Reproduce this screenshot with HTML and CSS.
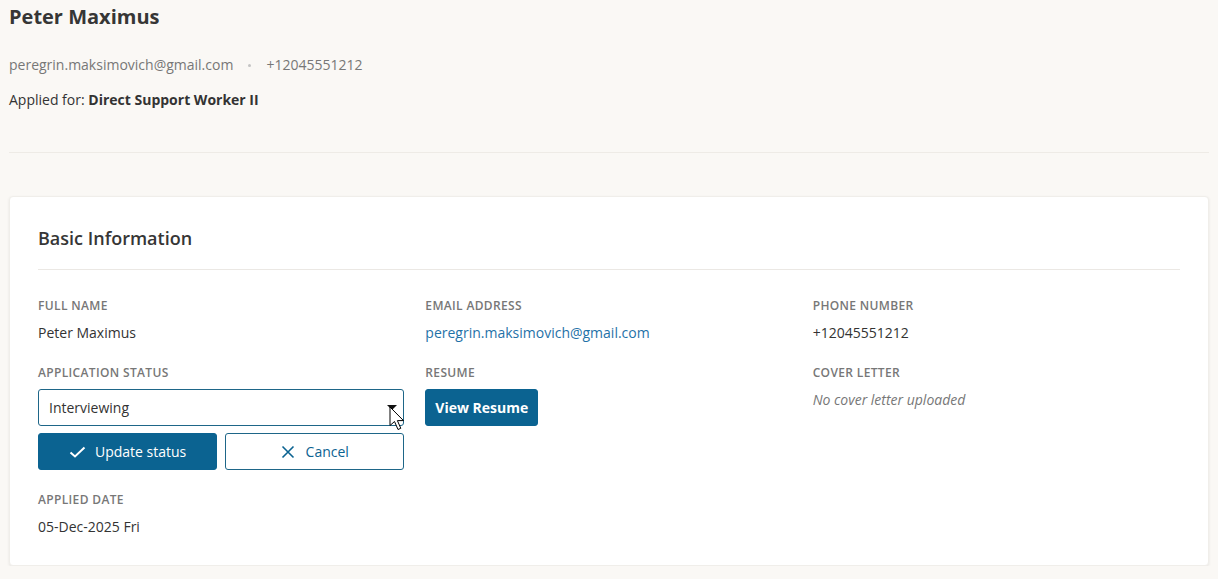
FILE: index.html
```html
<!DOCTYPE html>
<html lang="en">
<head>
<meta charset="utf-8">
<title>Peter Maximus</title>
<link rel="stylesheet" href="styles.css">
</head>
<body>
<div class="page">
  <header class="head">
    <h1 class="name">Peter Maximus</h1>
    <div class="contact">
      <span>peregrin.maksimovich@gmail.com</span>
      <span class="dot"></span>
      <span>+12045551212</span>
    </div>
    <div class="applied">Applied for: <strong>Direct Support Worker II</strong></div>
  </header>
  <hr class="divider">
  <section class="card">
    <h2 class="card-title">Basic Information</h2>
    <div class="grid">
      <div class="field">
        <div class="label">Full Name</div>
        <div class="value">Peter Maximus</div>
      </div>
      <div class="field">
        <div class="label">Email Address</div>
        <a class="value link" href="#">peregrin.maksimovich@gmail.com</a>
      </div>
      <div class="field">
        <div class="label">Phone Number</div>
        <div class="value">+12045551212</div>
      </div>

      <div class="field">
        <div class="label">Application Status</div>
        <div class="select">
          <span>Interviewing</span>
          <span class="caret"></span>
          <svg class="cursor" width="16" height="26" viewBox="0 0 16 26"><path d="M1 1 L1 19.5 L5.5 15.5 L9 23.5 L11.8 22.3 L8.4 14.6 L14.5 14.6 Z" fill="#fff" stroke="#000" stroke-width="1" stroke-linejoin="round"/></svg>
        </div>
        <div class="actions">
          <button class="btn primary">
            <svg width="17" height="16" viewBox="0 0 17 16"><path d="M1.5 8.5 L6 12.5 L15.5 3.5" fill="none" stroke="#fff" stroke-width="2"/></svg>
            Update status
          </button>
          <button class="btn outline">
            <svg width="14" height="14" viewBox="0 0 14 14"><path d="M1.5 1.5 L12.5 12.5 M12.5 1.5 L1.5 12.5" fill="none" stroke="#0b6391" stroke-width="1.6"/></svg>
            Cancel
          </button>
        </div>
      </div>
      <div class="field">
        <div class="label">Resume</div>
        <div class="resume-wrap"><button class="btn primary resume">View Resume</button></div>
      </div>
      <div class="field">
        <div class="label">Cover Letter</div>
        <div class="value muted">No cover letter uploaded</div>
      </div>

      <div class="field">
        <div class="label">Applied Date</div>
        <div class="value">05-Dec-2025 Fri</div>
      </div>
    </div>
  </section>
</div>
</body>
</html>
```

FILE: styles.css
```css
* { box-sizing: border-box; }
html, body { margin: 0; padding: 0; }
body {
  background: #faf8f5;
  font-family: "Open Sans", "Noto Sans", sans-serif;
  color: #333;
  font-size: 14px;
}
.page { padding: 3px 9px 0 9px; }
.head { padding: 0; }
.name {
  margin: 0;
  font-size: 20px;
  line-height: 28px;
  font-weight: 700;
  color: #363636;
}
.contact {
  margin-top: 24px;
  line-height: 20px;
  color: #777;
  display: flex;
  align-items: center;
  gap: 15px;
}
.contact .dot {
  width: 3px;
  height: 3px;
  border-radius: 50%;
  background: #c4c4c4;
}
.applied {
  margin-top: 15px;
  line-height: 20px;
  color: #333;
}
.applied strong { font-weight: 700; }
.divider {
  border: 0;
  border-top: 1px solid #eeebe6;
  margin: 42px 0 0;
}
.card {
  margin-top: 43px;
  background: #fff;
  border-radius: 4px;
  box-shadow: 0 1px 3px rgba(0,0,0,0.08);
  border: 1px solid #f0eeea;
  padding: 27px 28px 28px 28px;
}
.card-title {
  margin: 0;
  font-size: 18px;
  line-height: 28px;
  font-weight: 600;
  color: #363636;
  padding-bottom: 17px;
  border-bottom: 1px solid #ebe8e4;
}
.grid {
  margin-top: 27px;
  display: grid;
  grid-template-columns: repeat(3, 1fr);
  column-gap: 20px;
  row-gap: 21px;
}
.field { display: flex; flex-direction: column; gap: 8px; }
.label {
  font-size: 12px;
  line-height: 18px;
  font-weight: 600;
  color: #777;
  text-transform: uppercase;
  letter-spacing: 0.35px;
}
.value { line-height: 20px; color: #333; }
.link { color: #1f72a8; text-decoration: none; }
.muted { color: #777; font-style: italic; }
.select {
  position: relative;
  height: 37px;
  margin-top: -1px;
  margin-right: 1px;
  border: 1px solid #1e6688;
  border-radius: 3px;
  display: flex;
  align-items: center;
  padding: 0 10px;
  color: #333;
  background: #fff;
}
.caret {
  position: absolute;
  right: 6px;
  top: 15px;
  width: 0; height: 0;
  border-left: 5px solid transparent;
  border-right: 5px solid transparent;
  border-top: 5px solid #111;
}
.cursor { position: absolute; left: calc(100% - 14px); top: 16px; }
.actions {
  display: grid;
  grid-template-columns: 1fr 1fr;
  gap: 8px;
  margin-top: -1px;
  margin-right: 1px;
}
.resume-wrap { margin-top: -1px; }
.btn {
  font-family: inherit;
  font-size: 14px;
  height: 37px;
  border-radius: 3px;
  display: inline-flex;
  align-items: center;
  justify-content: center;
  gap: 9px;
  cursor: pointer;
}
.primary {
  background: #0b6391;
  border: 1px solid #0b6391;
  color: #fff;
}
.outline {
  background: #fff;
  border: 1px solid #1e6688;
  color: #0b6391;
  gap: 11px;
}
.resume {
  font-weight: 700;
  padding: 0 9px;
  height: 37px;
}
```
